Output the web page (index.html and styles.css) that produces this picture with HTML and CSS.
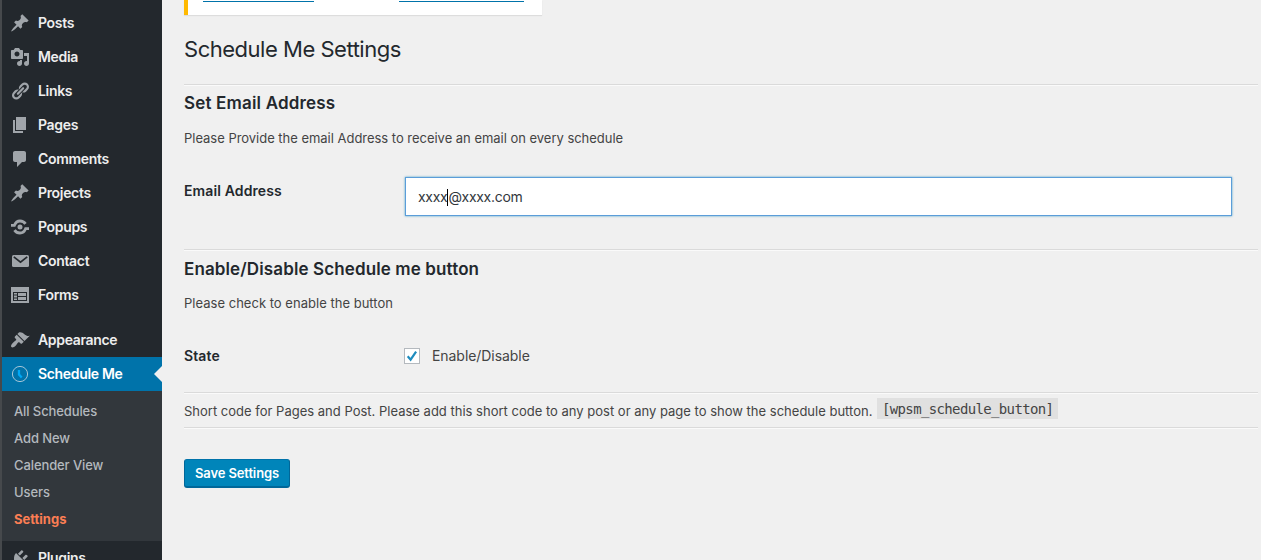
FILE: index.html
```html
<!DOCTYPE html>
<html lang="en">
<head>
<meta charset="utf-8">
<title>Schedule Me Settings</title>
<link rel="stylesheet" href="styles.css">
</head>
<body>
<svg class="defs" aria-hidden="true">
<symbol id="pin" viewBox="0 0 20 20"><path d="M10.44 3.02l1.82-1.82 6.36 6.35-1.83 1.82c-1.05-.68-2.48-.57-3.41.36l-.75.75c-.92.93-1.04 2.35-.35 3.41l-1.83 1.82-2.41-2.41-2.8 2.79c-.42.42-3.38 2.71-3.8 2.29s1.86-3.39 2.28-3.81l2.79-2.79L4.1 9.36l1.83-1.82c1.05.69 2.48.57 3.4-.36l.75-.75c.93-.92 1.05-2.35.36-3.41z"/></symbol>
</svg>
<div class="layout">
<nav class="sidebar">
<a class="item"><svg class="icon" viewBox="0 0 20 20"><use href="#pin"/></svg><span>Posts</span></a>
<a class="item"><svg class="icon" viewBox="0 0 20 20"><path d="M13 11V4c0-.55-.45-1-1-1h-1.67L9 1H5L3.67 3H2c-.55 0-1 .45-1 1v7c0 .55.45 1 1 1h10c.55 0 1-.45 1-1zM7 4.500c1.380 0 2.500 1.120 2.500 2.500S8.380 9.500 7 9.500 4.500 8.380 4.500 7 5.620 4.500 7 4.500zM14 6h5v10.500c0 1.380-1.120 2.500-2.500 2.500S14 17.880 14 16.500s1.120-2.500 2.500-2.500c.17 0 .34.02.5.05V9h-3V6zm-4 8.050V13h2v3.500c0 1.380-1.120 2.500-2.500 2.500S7 17.880 7 16.500 8.120 14 9.500 14c.17 0 .34.02.5.05z"/></svg><span>Media</span></a>
<a class="item"><svg class="icon" viewBox="0 0 20 20"><path d="M17.74 2.76c1.68 1.69 1.68 4.41 0 6.1l-1.53 1.52c-1.12 1.12-2.7 1.47-4.14 1.09l2.62-2.61.76-.77.76-.76c.84-.84.84-2.2 0-3.04-.84-.85-2.2-.85-3.04 0l-.77.76-3.38 3.38c-.37-1.44-.02-3.02 1.1-4.14l1.52-1.53c1.69-1.68 4.42-1.68 6.1 0zM8.59 13.43l5.34-5.34c.42-.42.42-1.1 0-1.52-.44-.43-1.13-.39-1.53 0l-5.33 5.34c-.42.42-.42 1.1 0 1.52.44.43 1.13.39 1.52 0zm-.76 2.29l4.14-4.15c.38 1.44.03 3.02-1.09 4.14l-1.52 1.53c-1.69 1.68-4.41 1.68-6.1 0-1.68-1.68-1.68-4.42 0-6.1l1.53-1.52c1.12-1.12 2.7-1.47 4.14-1.1l-4.14 4.15c-.85.84-.85 2.2 0 3.05.84.84 2.2.84 3.04 0z"/></svg><span>Links</span></a>
<a class="item"><svg class="icon" viewBox="0 0 20 20"><path d="M6 15V2h10v13H6zm-1 1h8v2H3V5h2v11z"/></svg><span>Pages</span></a>
<a class="item"><svg class="icon" viewBox="0 0 20 20"><path d="M5 2h9c1.1 0 2 .9 2 2v7c0 1.1-.9 2-2 2h-2l-5 5v-5H5c-1.1 0-2-.9-2-2V4c0-1.1.9-2 2-2z"/></svg><span>Comments</span></a>
<a class="item"><svg class="icon" viewBox="0 0 20 20"><use href="#pin"/></svg><span>Projects</span></a>
<a class="item"><svg class="icon" viewBox="0 0 20 20"><circle cx="10" cy="10" r="2.500"/><path class="stroke" d="M1 8.300h3.400C5.500 5.600 7.500 4 10 4c2.300 0 4.300 1.100 5.500 2.900M19 11.700h-3.400C14.500 14.400 12.500 16 10 16c-2.300 0-4.300-1.100-5.500-2.900"/></svg><span>Popups</span></a>
<a class="item"><svg class="icon" viewBox="0 0 20 20"><path d="M3.500 4h14q1.500 0 1.500 1.500v9q0 1.500-1.500 1.500h-14Q2 16 2 14.500v-9Q2 4 3.500 4z"/><path class="cut" d="M3.800 5.800l6.700 5.400 6.700-5.400"/></svg><span>Contact</span></a>
<a class="item"><svg class="icon" viewBox="0 0 20 20"><path fill-rule="evenodd" d="M1 2h18v16H1zM3 7v9h14V7zM4 8h3v1.500H4zM8 8h8v3H8zM4 10.500h3v2H4zM8 12h8v3H8zM4 13.500h3V15H4z"/></svg><span>Forms</span></a>
<a class="item gap"><svg class="icon" viewBox="0 0 20 20"><path d="M14.480 11.060L7.410 3.990l1.500-1.500c.5-.56 2.300-.47 3.510.32 1.210.8 1.430 1.280 2.910 2.100 1.180.64 2.450 1.260 4.450.85zm-.71.71L6.700 4.700 4.930 6.470c-.39.39-.39 1.020 0 1.410l1.060 1.060c.39.39.39 1.030 0 1.420-.6.6-1.430 1.110-2.210 1.690-.35.26-.7.53-1.010.84C1.430 14.230.4 16.080 1.400 17.070c.99 1 2.840-.03 4.180-1.360.31-.31.58-.66.85-1.020.57-.78 1.080-1.610 1.690-2.210.39-.39 1.020-.39 1.410 0l1.060 1.060c.39.39 1.020.39 1.410 0z"/></svg><span>Appearance</span></a>
<a class="item current"><svg class="icon" viewBox="0 0 20 20"><circle class="ring" cx="10" cy="10" r="7.600"/><path class="hands" d="M9 6v4.600l2.700 3"/></svg><span>Schedule Me</span></a>
<div class="submenu"><a>All Schedules</a><a>Add New</a><a>Calender View</a><a>Users</a><a class="on">Settings</a></div>
<a class="item"><svg class="icon" viewBox="0 0 20 20"><path d="M13.110 4.360L9.870 7.600 8 5.730l3.240-3.240c.35-.34 1.050-.2 1.560.32.52.51.66 1.210.31 1.550zm-8 1.770l.91-1.120 9.010 9.010-1.190.84c-.71.71-2.630 1.160-3.820 1.160H6.140L4.900 17.260c-.59.59-1.540.59-2.120 0-.59-.58-.59-1.530 0-2.120l1.240-1.240v-3.880c0-1.130.4-3.190 1.090-3.890zm7.260 3.970l3.240-3.240c.34-.35 1.040-.21 1.550.31.52.51.66 1.210.31 1.550l-3.240 3.250z"/></svg><span>Plugins</span></a>
</nav>
<main class="content">
<div class="notice"><i class="link one"></i><i class="link two"></i></div>
<h1>Schedule Me Settings</h1>
<section class="block email">
<h2>Set Email Address</h2>
<p class="intro">Please Provide the email Address to receive an email on every schedule</p>
<div class="row"><span class="label">Email Address</span><div class="field"><span>xxxx</span><i class="caret"></i><span>@xxxx.com</span></div></div>
</section>
<section class="block state">
<h2 class="wide">Enable/Disable Schedule me button</h2>
<p class="intro check">Please check to enable the button</p>
<div class="row"><span class="label">State</span><span class="checkbox"><svg viewBox="0 0 14 14"><path d="M2.700 7.300l2.900 3.400 5.500-8"/></svg></span><span class="option">Enable/Disable</span></div>
</section>
<section class="block short"><span class="hint">Short code for Pages and Post. Please add this short code to any post or any page to show the schedule button.</span><code>[wpsm_schedule_button]</code></section>
<section class="actions"><button>Save Settings</button></section>
</main>
</div>
</body>
</html>
```
FILE: styles.css
```css
* { box-sizing: border-box; }
body { margin: 0; height: 560px; overflow: hidden; background: #f0f0f0; color: #444; font: 13px/18px Inter, "Liberation Sans", sans-serif; }
.defs { display: none; }
.layout { display: flex; height: 560px; overflow: hidden; }
.sidebar { width: 162px; flex: none; padding-top: 6px; background: #23282d; border-left: 2px solid #46494c; }
.item { display: flex; align-items: center; height: 34px; padding-left: 8px; gap: 8px; color: #eee; font-size: 14px; font-weight: 600; letter-spacing: -.33px; }
.icon { width: 20px; height: 20px; fill: #a0a5aa; flex: none; }
.stroke { fill: none; stroke: #a0a5aa; stroke-width: 2.800; }
.cut { fill: none; stroke: #23282d; stroke-width: 1.700; }
.gap { margin-top: 11px; }
.current { position: relative; background: #0073aa; color: #fff; }
.current::after { content: ""; position: absolute; right: 0; top: 9px; border: 8px solid transparent; border-right-color: #f0f0f0; border-left-width: 0; }
.ring { fill: none; stroke: #a5c6d8; stroke-width: 1; }
.hands { fill: none; stroke: #00a8f5; stroke-width: 2.300; }
.submenu { height: 150px; padding: 7px 12px; background: #32373c; display: flex; flex-direction: column; }
.submenu a { height: 27px; line-height: 27px; color: #b4b9be; font-weight: 500; letter-spacing: -.1px; }
.submenu .on { color: #fb7e54; font-weight: 700; letter-spacing: 0; }
.content { flex: 1; padding: 0 3px 0 22px; }
.notice { width: 358px; height: 15px; display: flex; gap: 85px; padding: 1px 0 0 15px; background: #fff; border-left: 4px solid #ffb900; box-shadow: 0 1px 1px rgba(0,0,0,.08); }
.link { height: 1px; background: #0073aa; }
.one { width: 111px; }
.two { width: 125px; }
h1 { margin: 19px 0 20px; height: 30px; color: #23282d; font-size: 22px; font-weight: 400; line-height: 30px; letter-spacing: -.48px; }
.block { border-top: 1px solid #dadada; box-shadow: inset 0 1px #fafafa; }
.email { height: 165px; }
.state { height: 143px; }
h2 { margin: 0; padding-top: 6px; color: #23282d; font-size: 17px; font-weight: 600; line-height: 24px; letter-spacing: .17px; }
.wide { padding-top: 7px; letter-spacing: .12px; }
.intro { margin: 0; padding-top: 14px; letter-spacing: -.025px; }
.check { padding-top: 13px; letter-spacing: .02px; }
.row { display: flex; align-items: center; }
.label { width: 220px; color: #23282d; font-size: 14px; font-weight: 600; letter-spacing: .12px; }
.email .row { margin-top: 30px; align-items: flex-start; }
.email .label { width: 221px; padding-top: 5px; }
.field { width: 827px; height: 39px; display: flex; align-items: center; padding: 1px 12px 0; background: #fff; border: 1px solid #5b9dd9; box-shadow: 0 0 2px rgba(30,140,190,.8); color: #32373c; font-size: 14px; letter-spacing: -.3px; }
.caret { width: 1px; height: 17px; background: #000; }
.state .row { margin-top: 35px; }
.checkbox { width: 16px; height: 16px; margin-right: 12px; background: #fff; border: 1px solid #b4b9be; }
.checkbox svg { display: block; width: 14px; height: 14px; fill: none; stroke: #1e8cbe; stroke-width: 2.200; }
.option { font-size: 14px; letter-spacing: -.06px; }
.short { height: 35px; display: flex; align-items: flex-start; padding-top: 5px; white-space: nowrap; }
.hint { padding-top: 4px; width: 693px; letter-spacing: .005px; }
code { height: 21px; padding: 0 5px; background: #e0e0e0; font: 14px/22px "DejaVu Sans Mono", monospace; letter-spacing: -.64px; }
.actions { border-top: 1px solid #dadada; box-shadow: inset 0 1px #fafafa; padding-top: 31px; }
button { display: block; width: 106px; height: 29px; padding: 0; border: 1px solid #006799; border-top-color: #0073aa; border-bottom-width: 2px; border-radius: 3px; background: #0085ba; color: #fff; font: 600 13px/26px Inter, sans-serif; letter-spacing: -.12px; }
```
